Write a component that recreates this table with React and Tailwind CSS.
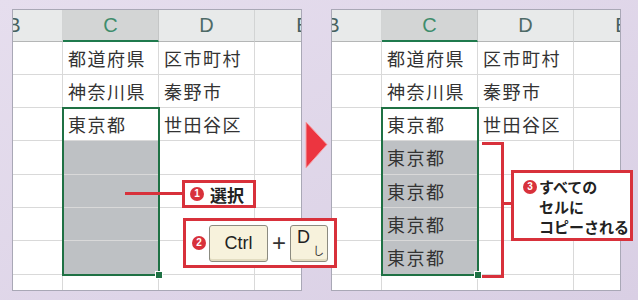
import React from 'react'

const RED = 'bg-[#d8313b]'

// ── Rows of the sheet ─────────────────────────────────────────────────────────
const baseRows = [
  { c: '都道府県', d: '区市町村', h: 'h-[33px]' },
  { c: '神奈川県', d: '秦野市', h: 'h-[33px]' },
  { c: '東京都', d: '世田谷区', h: 'h-[33px]' },
]

function NumDot({ n }) {
  return (
    <span className={`w-[14px] h-[14px] rounded-full ${RED} text-white text-[10px] font-bold flex items-center justify-center shrink-0 leading-none font-['Liberation_Sans',sans-serif]`}>
      {n}
    </span>
  )
}

function Cell({ children, gray, last, lastRow, h }) {
  return (
    <div
      className={`${h} flex items-center pl-[5px] overflow-hidden whitespace-nowrap ${last ? '' : 'border-r'} ${lastRow ? '' : 'border-b'} border-[#d9d9d9] ${gray ? 'bg-[#bec1c4] border-[#acafb2]' : 'bg-white'}`}
    >
      {children}
    </div>
  )
}

// ── One spreadsheet panel ─────────────────────────────────────────────────────
function Sheet({ filled }) {
  const grayRows = [
    { h: 'h-[34px]' },
    { h: 'h-[33px]' },
    { h: 'h-[33px]' },
    { h: 'h-[34px]' },
  ]
  return (
    <div className="relative w-[290px] h-[282px] border border-[#a9a8b6] bg-white shrink-0">
      <div className="grid grid-cols-[50px_96px_96px_46px] text-[#333] text-[18px] tracking-[1.5px] font-['Noto_Sans_CJK_JP',sans-serif]">
        {/* header */}
        <div className="h-[32px] bg-[#e8eaea] border-r border-b border-r-[#d2d4d4] border-b-[#b4b6b6] overflow-hidden flex justify-end">
          <div className="w-[96px] shrink-0 text-center text-[20px] leading-[31px] text-[#47615f] tracking-normal font-['Liberation_Sans',sans-serif]">B</div>
        </div>
        <div className="h-[32px] bg-[#d3d5d5] border-r border-r-[#c4c6c6] border-b-2 border-b-[#1f7a4d] text-center text-[20px] leading-[31px] text-[#3f8d6d] tracking-normal font-['Liberation_Sans',sans-serif]">C</div>
        <div className="h-[32px] bg-[#e8eaea] border-r border-b border-r-[#d2d4d4] border-b-[#b4b6b6] text-center text-[20px] leading-[31px] text-[#4e6a67] tracking-normal font-['Liberation_Sans',sans-serif]">D</div>
        <div className="h-[32px] bg-[#e8eaea] border-b border-b-[#b4b6b6] overflow-hidden flex justify-start">
          <div className="w-[96px] shrink-0 text-center text-[20px] leading-[31px] text-[#47615f] tracking-normal font-['Liberation_Sans',sans-serif]">E</div>
        </div>

        {baseRows.map((r, i) => (
          <React.Fragment key={i}>
            <Cell h={r.h} />
            <Cell h={r.h}>{r.c}</Cell>
            <Cell h={r.h}>{r.d}</Cell>
            <Cell h={r.h} last />
          </React.Fragment>
        ))}

        {grayRows.map((r, i) => (
          <React.Fragment key={'g' + i}>
            <Cell h={r.h} />
            <Cell h={r.h} gray>{filled ? '東京都' : ''}</Cell>
            <Cell h={r.h} />
            <Cell h={r.h} last />
          </React.Fragment>
        ))}

        <Cell h="h-[15px]" lastRow />
        <Cell h="h-[15px]" lastRow />
        <Cell h="h-[15px]" lastRow />
        <Cell h="h-[15px]" lastRow last />
      </div>

      {/* selection frame + fill handle */}
      <div className="absolute left-[49px] top-[97px] w-[98px] h-[169px] border-2 border-[#1f7144]" />
      <div className="absolute left-[142px] top-[261px] w-[8px] h-[8px] bg-[#1f7144] border border-white" />
    </div>
  )
}

function Key({ children, className }) {
  return (
    <div className={`h-[37px] rounded-[3px] border border-[#8c8b80] bg-[#f7f2dc] shadow-[inset_0_-2px_0_#e2dcc0] ${className}`}>
      {children}
    </div>
  )
}

// ════════════════════════════════════════════════════════════════════════════
export default function App() {
  return (
    <div className="relative w-[638px] h-[300px] overflow-hidden bg-linear-to-br from-[#e6deee] to-[#d9cfe4] flex items-start pl-[12px] pt-[9px] font-['Noto_Sans_CJK_JP',sans-serif]">
      <Sheet />

      {/* arrow between panels */}
      <div className="w-[29px] shrink-0 pl-[3px] mt-[112px]">
        <svg width="23" height="48" viewBox="0 0 23 48">
          <polygon points="1,1 22,23.5 1,47" fill="#ec3540" stroke="#f6a3a8" strokeWidth="1" />
        </svg>
      </div>

      <Sheet filled />

      {/* ── callout 1 ── */}
      <div className={`absolute left-[125px] top-[192px] w-[58px] h-[3px] ${RED}`} />
      <div className="absolute left-[182px] top-[180px] w-[74px] h-[28px] border-[3px] border-[#d8313b] bg-white flex items-center pl-[5px] gap-[6px]">
        <NumDot n="1" />
        <span className="text-[17px] font-bold text-[#222] leading-none">選択</span>
      </div>

      {/* ── callout 2 ── */}
      <div className="absolute left-[183px] top-[218px] w-[154px] h-[50px] border-[3px] border-[#d8313b] bg-white flex items-center pl-[6px]">
        <NumDot n="2" />
        <Key className="ml-[3px] w-[59px] flex items-center justify-center">
          <span className="text-[18px] text-[#222] font-['Liberation_Sans',sans-serif]">Ctrl</span>
        </Key>
        <span className="w-[22px] text-center text-[24px] font-light leading-none text-[#333] font-['Liberation_Sans',sans-serif]">+</span>
        <Key className="w-[38px] relative">
          <span className="absolute left-[6px] top-[2px] text-[18px] leading-none text-[#222] font-['Liberation_Sans',sans-serif]">D</span>
          <span className="absolute left-[22px] top-[19px] text-[11px] leading-none text-[#333]">し</span>
        </Key>
      </div>

      {/* ── callout 3 bracket ── */}
      <div className={`absolute left-[482px] top-[142px] w-[21px] h-[3px] ${RED}`} />
      <div className={`absolute left-[501px] top-[142px] w-[3px] h-[136px] ${RED}`} />
      <div className={`absolute left-[482px] top-[275px] w-[21px] h-[3px] ${RED}`} />
      <div className={`absolute left-[501px] top-[202px] w-[11px] h-[3px] ${RED}`} />
      <div className="absolute left-[511px] top-[170px] w-[122px] h-[71px] border-[3px] border-[#d8313b] bg-white pl-[9px] pt-[4px] text-[15px] font-bold leading-[20px] text-[#222]">
        <div className="flex items-center gap-[2px]">
          <NumDot n="3" />
          <span>すべての</span>
        </div>
        <div className="pl-[16px]">セルに</div>
        <div className="pl-[16px] whitespace-nowrap">コピーされる</div>
      </div>
    </div>
  )
}
